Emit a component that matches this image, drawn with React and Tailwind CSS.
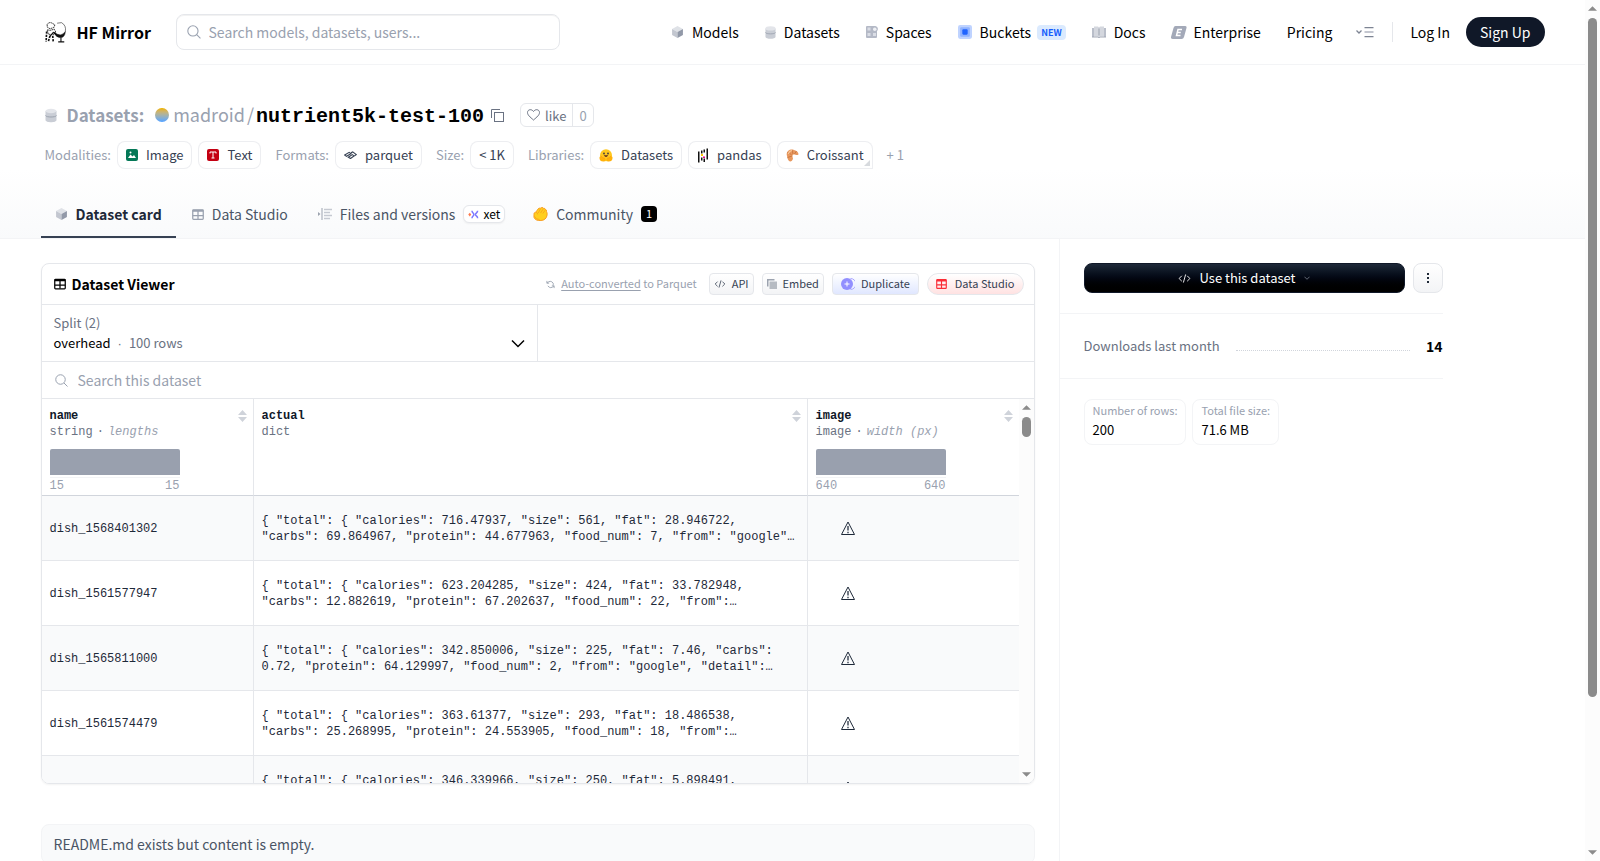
import React from "react";

const CubeIcon = ({ className }) => (
  <svg viewBox="0 0 24 24" className={className}>
    <path d="M12 1 22 6.500 12 12 2 6.500z" fill="#dfe2e7" />
    <path d="M2 6.500 12 12v11L2 17.500z" fill="#c3c7d0" />
    <path d="M22 6.500 12 12v11l10-5.500z" fill="#9299a8" />
  </svg>
);

const DatabaseIcon = ({ className }) => (
  <svg viewBox="0 0 24 28" className={className}>
    <path d="M1 5v18c0 6 22 6 22 0V5z" fill="#c9cdd5" />
    <path d="M1 14c2 4 20 4 22 0" fill="none" stroke="#9ca3af" strokeWidth="2" />
    <ellipse cx="12" cy="5" rx="11" ry="4.500" fill="#e3e5ea" />
  </svg>
);

const SpacesIcon = ({ className }) => (
  <svg viewBox="0 0 24 24" className={className}>
    <path d="M2 0h14a6 6 0 0 1 6 9v13a2 2 0 0 1-2 2H2a2 2 0 0 1-2-2V2a2 2 0 0 1 2-2z" fill="#b4b9c6" />
    <circle cx="18" cy="6" r="5.500" fill="#b4b9c6" />
    <rect x="3" y="3" width="6" height="6" fill="#dadde5" />
    <circle cx="17.500" cy="6.500" r="3.500" fill="#eef0f4" />
    <rect x="3" y="14" width="6" height="6" fill="#dadde5" />
    <rect x="14" y="14" width="6" height="6" fill="#dadde5" />
  </svg>
);

const BucketIcon = ({ className }) => (
  <svg viewBox="0 0 26 26" className={className}>
    <rect width="26" height="26" rx="4" fill="#bfd3ff" />
    <rect x="4" y="4" width="18" height="18" rx="2" fill="#8fb2ff" />
    <rect x="8" y="8" width="10" height="10" rx="2" fill="#1f63ff" />
  </svg>
);

const BookIcon = ({ className }) => (
  <svg viewBox="0 0 28 24" className={className}>
    <path d="M0 22V4h4v18z M24 4h4v18h-4z" fill="#b9bec9" />
    <path d="M4 1h8l2 2 2-2h8v20h-8l-2 2-2-2H4z" fill="#d4d7de" />
    <path d="M14 5v14" stroke="#9ca3af" strokeWidth="2" />
    <path d="M0 22h12l2 1.500 2-1.500h12" stroke="#a3a9b6" strokeWidth="2" fill="none" />
  </svg>
);

const EnterpriseIcon = ({ className }) => (
  <svg viewBox="0 0 32 26" className={className}>
    <path d="M9 0h19q4 0 3 4l-5 18q-1 4-5 4H4q-5 0-4-4L5 4q1-4 4-4z" fill="#a3a9b8" />
    <path d="M22 7h-8l-3 12h8M12.500 13h7" stroke="#fff" strokeWidth="3" fill="none" />
  </svg>
);

const MenuIcon = ({ className }) => (
  <svg viewBox="0 0 36 24" className={className} fill="none" stroke="#7d8493" strokeWidth="2.500">
    <path d="m1 9 5 5 5-5" />
    <path d="M17 3h18M17 21h18" />
    <path d="M17 12h18" stroke="#b0b5c0" strokeWidth="3" />
  </svg>
);

const SearchIcon = ({ className }) => (
  <svg viewBox="0 0 26 26" className={className} fill="none" stroke="currentColor" strokeWidth="2">
    <circle cx="11" cy="11" r="9.500" />
    <path d="m18 18 7 7" />
  </svg>
);

const GridIcon = ({ className }) => (
  <svg viewBox="0 0 24 22" className={className} fill="none" stroke="currentColor" strokeWidth="2.500">
    <rect x="1.500" y="1.500" width="21" height="19" rx="1.500" />
    <path d="M1.500 3.500h21" strokeWidth="4" />
    <path d="M1.500 13h21M12 4v16" />
  </svg>
);

const CodeIcon = ({ className }) => (
  <svg viewBox="0 0 28 20" className={className} fill="none" stroke="currentColor" strokeWidth="2">
    <path d="M8 4 2 10l6 6M20 4l6 6-6 6M16.500 1l-5 18" />
  </svg>
);

const ChevronIcon = ({ className }) => (
  <svg viewBox="0 0 28 18" className={className} fill="none" stroke="currentColor" strokeWidth="3">
    <path d="M2 3l12 12L26 3" />
  </svg>
);

const FilesIcon = ({ className }) => (
  <svg viewBox="0 0 28 24" className={className} fill="none" stroke="#c5c9d1">
    <path d="M0 8v8l5-4z" fill="#9ca3af" stroke="none" />
    <path d="M8 0v24" stroke="#9ca3af" strokeWidth="2" />
    <path d="M12 3h16M12 9h12M12 15h16M12 21h12" strokeWidth="3" />
  </svg>
);

const HandIcon = ({ className }) => (
  <svg viewBox="0 0 32 30" className={className}>
    <path
      d="M2 16q-1-4 4-5l5-7q2-3 4-1l4-2q3 0 3 2 4-1 4 2 4 1 3 5 2 3 1 8-2 10-13 11Q5 30 2 22z"
      fill="#ffcf1f"
      stroke="#f79a1c"
      strokeWidth="2"
    />
    <path d="m11 13 5-9M16 13l6-9M21 14l5-7M6 11q4 1 4 5M3 20q4 7 11 7" stroke="#f79a1c" strokeWidth="1.500" fill="none" />
  </svg>
);

const XetIcon = ({ className }) => (
  <svg viewBox="0 0 28 24" className={className} fill="none" strokeWidth="4">
    <path d="M10 2c0 6 5 6 5 10s-5 4-5 10" stroke="#7c78ff" />
    <path d="M25 2c0 6-6 6-6 10s6 4 6 10" stroke="#7c78ff" />
    <path d="m4 7 4 5-4 5-4-5z" fill="#ff7a4d" />
  </svg>
);

const HugIcon = ({ className }) => (
  <svg viewBox="0 0 28 26" className={className}>
    <circle cx="14" cy="12.500" r="12" fill="#ffc81f" />
    <path d="M1 16q-1 10 10 9 4-4 1-6-5-1-8-5zM27 16q1 10-10 9-4-4-1-6 5-1 8-5z" fill="#ffb10b" />
    <path d="M12 19q-5-1-8-5M16 19q5-1 8-5" stroke="#ff9d0b" strokeWidth="1.500" fill="none" />
    <circle cx="10" cy="9" r="1.800" fill="#3a3b45" />
    <circle cx="18" cy="9" r="1.800" fill="#3a3b45" />
    <path d="M9.500 12.500q4.500 7 9 0z" fill="#5b2a1d" />
  </svg>
);

const PandasIcon = ({ className }) => (
  <svg viewBox="0 0 24 30" className={className}>
    <path d="M2 7h3v22H2zM19 1h3v22h-3zM8 5h3v6H8zM8 19h3v6H8zM13 3h3v6h-3zM13 21h3v7h-3z" fill="#111" />
    <path d="M8 12h4v4H8z" fill="#ffca00" />
    <path d="M12 17h4v3h-4z" fill="#e70488" />
  </svg>
);

const CroissantIcon = ({ className }) => (
  <svg viewBox="0 0 26 26" className={className}>
    <path d="M2 14C-1 5 8-1 16 2c6 1 9 5 9 9-4 3-7-1-10 0-3 1-2 5-1 8-1 5-5 7-8 5-3-3-3-6-4-10z" fill="#e8985e" />
    <path d="m3 7 8 4M12 2l2 8M21 4l-4 6M3 17l9-3" stroke="#c26f3b" strokeWidth="1.500" fill="none" />
    <path d="M12 3q-6 1-7 7" stroke="#f8c79b" strokeWidth="2.500" fill="none" />
  </svg>
);

const WarningIcon = ({ className }) => (
  <svg viewBox="0 0 32 32" className={className} fill="none" stroke="currentColor" strokeWidth="2">
    <path d="M16 4 3 29h26z" />
    <path d="M16 12v9M16 23.500v3" strokeWidth="2.500" />
  </svg>
);

const SortIcon = ({ className }) => (
  <svg viewBox="0 0 9 12" className={className} fill="#cfd3da">
    <path d="M4.500 0 9 5H0zM4.500 12 0 7h9z" />
  </svg>
);

const LogoIcon = ({ className }) => (
  <svg viewBox="0 0 40 40" className={className} fill="none" stroke="#111">
    <path d="M4 6q4-5 9-2l5 3-2 5-7 2-5-3zM4 16l5 1 8-2 3 6-5 4-9-1z" strokeWidth="1.500" strokeDasharray="3 1" />
    <path d="M3 19 2 38M9 27l-3 11M14 27l1 11" strokeWidth="3" strokeDasharray="4 2" />
    <path d="m8 29 7-8 6 4" strokeWidth="2" />
    <path d="M16 20q13 11 21-1-1 12-10 11-7 0-11-10z" fill="#111" />
    <path d="M37 19q2-11-7-16l-8 1" strokeWidth="1" />
    <path d="M29 30v8M24 38h11" strokeWidth="2" />
  </svg>
);

const navLinks = [
  { label: "Models", icon: <CubeIcon className="mr-2 h-[14px] w-[13px]" /> },
  { label: "Datasets", icon: <DatabaseIcon className="mr-2 h-[13px] w-[11px]" /> },
  { label: "Spaces", icon: <SpacesIcon className="mr-2 size-3" /> },
  { label: "Buckets", icon: <BucketIcon className="mr-2 size-[14px]" />, isNew: true },
  { label: "Docs", icon: <BookIcon className="mr-2 h-3 w-[14px]" /> },
  { label: "Enterprise", icon: <EnterpriseIcon className="mr-[6px] h-[13px] w-4" /> },
  { label: "Pricing" },
];

const tagGroups = [
  {
    title: "Modalities:",
    tags: [
      {
        label: "Image",
        icon: (
          <svg viewBox="0 0 24 24" className="size-3">
            <rect width="24" height="24" rx="4" fill="#047857" />
            <path d="m4 18 5-7 4 4 3-3 4 6z" fill="#fff" />
            <circle cx="9" cy="7" r="2" fill="#fff" />
          </svg>
        ),
      },
      {
        label: "Text",
        icon: (
          <svg viewBox="0 0 24 24" className="size-3">
            <rect width="24" height="24" rx="4" fill="#c40012" />
            <path d="M6 9V6h12v3M12 6v12M9 18h6" stroke="#fff" strokeWidth="2" fill="none" />
          </svg>
        ),
      },
    ],
  },
  {
    title: "Formats:",
    tags: [
      {
        label: "parquet",
        icon: (
          <svg viewBox="0 0 28 18" className="h-2 w-[13px] text-gray-700" fill="none" stroke="currentColor" strokeWidth="2.500">
            <path d="m1 9 10-6 4 3-10 6zM9 14l9-6 4 3-8 6zM15 4l4-2 8 6-4 3" />
          </svg>
        ),
      },
    ],
  },
  { title: "Size:", tags: [{ label: "< 1K" }] },
  {
    title: "Libraries:",
    tags: [
      { label: "Datasets", icon: <HugIcon className="h-[13px] w-[14px]" /> },
      { label: "pandas", icon: <PandasIcon className="h-[15px] w-3" /> },
      { label: "Croissant", icon: <CroissantIcon className="size-[13px]" />, corner: true },
    ],
  },
];

const rows = [
  {
    name: "dish_1568401302",
    actual:
      '{ "total": { "calories": 716.47937, "size": 561, "fat": 28.946722, "carbs": 69.864967, "protein": 44.677963, "food_num": 7, "from": "google"…',
  },
  {
    name: "dish_1561577947",
    actual:
      '{ "total": { "calories": 623.204285, "size": 424, "fat": 33.782948, "carbs": 12.882619, "protein": 67.202637, "food_num": 22, "from":…',
  },
  {
    name: "dish_1565811000",
    actual:
      '{ "total": { "calories": 342.850006, "size": 225, "fat": 7.46, "carbs": 0.72, "protein": 64.129997, "food_num": 2, "from": "google", "detail":…',
  },
  {
    name: "dish_1561574479",
    actual:
      '{ "total": { "calories": 363.61377, "size": 293, "fat": 18.486538, "carbs": 25.268995, "protein": 24.553905, "food_num": 18, "from":…',
  },
  {
    name: "dish_1560442303",
    actual:
      '{ "total": { "calories": 346.339966, "size": 250, "fat": 5.898491, "carbs": 40.155243, "protein": 30.461754, "food_num": 12, "from":…',
  },
];

const columns = [
  { name: "name", type: "string", stat: "lengths", min: "15", max: "15", width: "w-[211px]" },
  { name: "actual", type: "dict", width: "border-l border-l-gray-200" },
  { name: "image", type: "image", stat: "width (px)", min: "640", max: "640", width: "w-[212px] border-l border-l-gray-200" },
];

const ScrollTrack = ({ children }) => (
  <div className="flex w-[15px] shrink-0 flex-col items-center bg-[#fcfcfc] py-[6px]">
    <svg viewBox="0 0 10 5" className="h-[5px] w-[9px] shrink-0" fill="#8b8b8b">
      <path d="M5 0l5 5H0z" />
    </svg>
    {children}
    <svg viewBox="0 0 10 5" className="mt-auto h-[5px] w-[9px] shrink-0" fill="#8b8b8b">
      <path d="M5 5l5-5H0z" />
    </svg>
  </div>
);

const Header = () => (
  <header className="border-b border-gray-100">
    <div className="mx-auto flex h-16 max-w-[1536px] items-center px-4">
      <a href="#" className="flex w-[135px] shrink-0 items-center gap-[10px] pl-1">
        <LogoIcon className="size-[22px]" />
        <span className="text-base font-bold">HF Mirror</span>
      </a>
      <label className="flex h-9 w-96 items-center gap-2 rounded-lg border border-gray-200 px-[10px] text-gray-400 inset-shadow-2xs">
        <SearchIcon className="size-[14px] shrink-0" />
        <input
          type="text"
          aria-label="Search models, datasets, users"
          placeholder="Search models, datasets, users..."
          className="w-full outline-none placeholder:text-gray-400"
        />
      </label>
      <nav className="ml-auto flex items-center">
        <div className="mr-6 flex items-center gap-[26px]">
          {navLinks.map((link) => (
            <a key={link.label} href="#" className="flex items-center">
              {link.icon}
              {link.label}
              {link.isNew && (
                <span className="ml-[6px] rounded-sm bg-blue-100 px-1 text-[9px] leading-[15px] font-bold text-blue-600">
                  NEW
                </span>
              )}
            </a>
          ))}
        </div>
        <button aria-label="More" className="mr-[18px]">
          <MenuIcon className="h-3 w-[18px]" />
        </button>
        <span className="mr-[17px] h-5 w-px bg-gray-200" />
        <a href="#" className="mr-4">
          Log In
        </a>
        <a href="#" className="flex h-[30px] items-center rounded-full bg-gray-900 px-[14px] text-white">
          Sign Up
        </a>
      </nav>
    </div>
  </header>
);

const RepoHeader = () => (
  <div className="border-b border-gray-100 bg-linear-to-b from-white from-60% to-gray-50">
    <div className="mx-auto max-w-[1536px] px-4 pt-9">
      <h1 className="ml-1 flex h-7 items-center text-lg text-gray-400">
        <DatabaseIcon className="mr-[10px] h-[15px] w-3" />
        <span className="mr-[11px] text-[17px] font-bold">Datasets:</span>
        <span className="mr-1 size-[14px] rounded-full bg-linear-to-b from-yellow-500 to-blue-400" />
        <span className="flex items-baseline">
          <a href="#">madroid</a>
          <span className="mx-[2px]">/</span>
          <a href="#" className="font-['Liberation_Mono',monospace] text-xl font-bold text-black">
            nutrient5k-test-100
          </a>
        </span>
        <button aria-label="Copy name" className="mr-4 ml-[7px] text-gray-500">
          <svg viewBox="0 0 26 26" className="size-[13px]" fill="none" stroke="currentColor" strokeWidth="2">
            <rect x="7" y="7" width="18" height="18" />
            <path d="M1 18V1h17" />
          </svg>
        </button>
        <span className="flex h-6 items-center rounded-md border border-gray-200 bg-white text-[13px] leading-none">
          <button className="flex h-full items-center gap-[5px] px-[6px] text-gray-500">
            <svg viewBox="0 0 26 24" className="h-3 w-[13px]" fill="none" stroke="currentColor" strokeWidth="2">
              <path d="M13 22C6 16 1 12 1 7c0-6 8-8 12-2 4-6 12-4 12 2 0 5-5 9-12 15z" />
            </svg>
            like
          </button>
          <button className="h-full border-l border-gray-200 px-[6px]">0</button>
        </span>
      </h1>

      <div className="mt-3 ml-1 flex h-7 items-center text-[13px]">
        {tagGroups.map((group) => (
          <div key={group.title} className="mr-2 flex items-center">
            <span className="mr-[6px] text-gray-400">{group.title}</span>
            {group.tags.map((tag) => (
              <a
                key={tag.label}
                href="#"
                className={`relative mr-[6px] flex h-7 items-center gap-2 rounded-lg border border-gray-200/70 bg-white px-2 text-gray-700 ${tag.corner ? "rounded-br-none" : ""}`}
              >
                {tag.icon}
                {tag.label}
                {tag.corner && (
                  <svg viewBox="0 0 6 6" className="absolute right-[2px] bottom-[2px] size-[6px]" fill="#d7dade">
                    <path d="M6 0v6H0z" />
                  </svg>
                )}
              </a>
            ))}
          </div>
        ))}
        <button className="text-gray-400">+ 1</button>
      </div>

      <nav className="mt-[21px] flex h-12 text-gray-600">
        <a
          href="#"
          className="flex items-center gap-2 border-y-2 border-t-transparent border-b-gray-700 px-[14px] font-bold text-gray-800"
        >
          <CubeIcon className="h-[14px] w-[13px]" />
          Dataset card
        </a>
        <a href="#" className="flex items-center gap-2 px-4">
          <GridIcon className="h-[11px] w-3 text-gray-400" />
          Data Studio
        </a>
        <a href="#" className="flex items-center gap-2 px-[14px]">
          <FilesIcon className="h-3 w-[14px]" />
          Files and versions
          <span className="flex h-[18px] items-center gap-1 rounded-md border border-gray-200 bg-white px-1 text-xs text-black shadow-xs">
            <XetIcon className="h-[9px] w-[11px]" />
            xet
          </span>
        </a>
        <a href="#" className="flex items-center gap-2 px-[14px]">
          <HandIcon className="h-[14px] w-[15px]" />
          Community
          <span className="flex size-4 items-center justify-center rounded-sm bg-black text-[11px] text-white">1</span>
        </a>
      </nav>
    </div>
  </div>
);

const Viewer = () => (
  <section className="overflow-hidden rounded-lg border border-gray-200 shadow-xs">
    {/* Toolbar */}
    <div className="flex h-[41px] items-center border-b border-gray-200 pr-[10px] pl-3">
      <GridIcon className="mr-[6px] size-3" />
      <h2 className="font-bold">Dataset Viewer</h2>
      <div className="ml-auto flex items-center text-[11px] text-gray-700">
        <svg viewBox="0 0 20 20" className="mr-[6px] size-[9px] text-gray-400" fill="none" stroke="currentColor" strokeWidth="2">
          <path d="M2 2v5h5M2 7q8-8 14 0v4M18 18v-5h-5M18 13q-8 8-14 0" />
        </svg>
        <span className="mr-3 text-gray-400">
          <a href="#" className="underline underline-offset-2">
            Auto-converted
          </a>{" "}
          to Parquet
        </span>
        <button className="mr-2 flex h-[22px] items-center gap-[6px] rounded-sm border border-gray-200 bg-linear-to-b from-white to-gray-100 px-1">
          <CodeIcon className="h-2 w-3" />
          API
        </button>
        <button className="mr-2 flex h-[22px] items-center gap-[6px] rounded-sm border border-gray-200 bg-linear-to-b from-white to-gray-100 px-1">
          <svg viewBox="0 0 20 20" className="size-[10px]">
            <path d="M0 0h15v3H3v12H0z" fill="#9ca3af" />
            <path d="M5 5h15v15H5z" fill="#b6bbc2" />
          </svg>
          Embed
        </button>
        <button className="mr-2 flex h-[22px] items-center gap-[6px] rounded-sm border border-gray-200 bg-linear-to-b from-white to-indigo-100 px-2">
          <svg viewBox="0 0 28 24" className="h-3 w-[14px]">
            <path d="M19 1a11 11 0 0 1 0 22" fill="none" stroke="#a9a5ff" strokeWidth="2" />
            <circle cx="12" cy="12" r="12" fill="#928fff" />
            <path d="M12 7v10M7 12h10" stroke="#fff" strokeWidth="2" />
          </svg>
          Duplicate
        </button>
        <a href="#" className="flex h-[22px] items-center gap-2 rounded-full border border-gray-200 bg-linear-to-b from-white to-red-100 px-2">
          <GridIcon className="h-[10px] w-[11px] text-red-500" />
          Data Studio
        </a>
      </div>
    </div>

    {/* Split picker */}
    <div className="grid h-[57px] grid-cols-2 border-b border-gray-200 text-[13px]">
      <button className="flex items-end justify-between border-r border-gray-200 px-3 pb-[7px] text-left leading-5">
        <span className="text-gray-500">
          Split (2)
          <br />
          <span className="text-black">overhead</span>
          <span className="mx-[7px] font-['Liberation_Sans',sans-serif]">·</span>
          100 rows
        </span>
        <ChevronIcon className="mb-[6px] h-[9px] w-[14px]" />
      </button>
    </div>

    <label className="flex h-[37px] items-center gap-[10px] border-b border-gray-200 px-[13px] text-gray-400">
      <SearchIcon className="size-[13px] shrink-0" />
      <input
        type="text"
        aria-label="Search this dataset"
        placeholder="Search this dataset"
        className="w-full outline-none placeholder:text-gray-400"
      />
    </label>

    <div className="flex h-[384px]">
      <div className="min-w-0 flex-1 overflow-hidden">
        <table className="w-full table-fixed border-separate border-spacing-0 font-['Liberation_Mono',monospace] text-xs leading-4 text-gray-800">
          <thead>
            <tr className="h-[97px]">
              {columns.map((col) => (
                <th
                  key={col.name}
                  className={`border-b border-b-gray-300 pt-[9px] pr-[6px] pb-px pl-2 text-left align-top font-normal text-gray-500 ${col.width}`}
                >
                  <div className="flex items-center justify-between">
                    <span className="font-bold text-gray-900">{col.name}</span>
                    {/* sort toggle */}
                    <SortIcon className="h-3 w-[9px]" />
                  </div>
                  <div>
                    {col.type}
                    {col.stat && (
                      <>
                        <span className="mx-1">·</span>
                        <span className="text-gray-400 italic">{col.stat}</span>
                      </>
                    )}
                  </div>
                  {col.stat && (
                    <div className="mt-[9px] w-[130px] text-gray-400">
                      <div className="h-[26px] rounded-t-[2px] bg-[#99a0ae]" />
                      <div className="mt-[2px] flex justify-between border-t border-gray-100">
                        <span>{col.min}</span>
                        <span>{col.max}</span>
                      </div>
                    </div>
                  )}
                </th>
              ))}
            </tr>
          </thead>
          <tbody>
            {rows.map((row) => (
              <tr key={row.name} className="h-[65px] odd:bg-gray-50">
                <td className="border-b border-gray-200 px-2 pt-[2px]">{row.name}</td>
                <td className="border-b border-l border-gray-200 px-2 pt-[2px]">{row.actual}</td>
                <td className="border-b border-l border-gray-200 px-2">
                  <div className="flex w-16 justify-center">
                    <WarningIcon className="size-4" />
                  </div>
                </td>
              </tr>
            ))}
          </tbody>
        </table>
      </div>
      <ScrollTrack>
        <div className="mt-[7px] h-5 w-[9px] rounded-full bg-[#8b8b8b]" />
      </ScrollTrack>
    </div>
  </section>
);

const Sidebar = () => (
  <aside className="mr-[102px] w-96 shrink-0 border-l border-gray-100 pt-6">
    <div className="mb-5 flex gap-2 pl-6 text-[13px]">
      <button className="flex h-[30px] flex-1 items-center justify-center gap-2 rounded-lg border border-gray-900 bg-linear-to-b from-gray-800 via-gray-950 to-black text-white">
        <CodeIcon className="h-[9px] w-[13px]" />
        Use this dataset
        <ChevronIcon className="h-1 w-[6px] text-gray-400" />
      </button>
      <button
        aria-label="More options"
        className="flex size-[30px] items-center justify-center rounded-lg border border-gray-200 bg-linear-to-b from-white to-gray-100"
      >
        <svg viewBox="0 0 2 10" className="h-[10px] w-[2px]" fill="#1f2937">
          <path d="M0 0h2v2H0zM0 4h2v2H0zM0 8h2v2H0z" />
        </svg>
      </button>
    </div>
    <div className="flex h-[66px] items-center border-y border-gray-100 pl-6">
      <span className="text-[13px] text-gray-500">Downloads last month</span>
      <span className="mx-4 mt-2 flex-1 border-b border-dotted border-gray-300" />
      <span className="font-bold">14</span>
    </div>
    <div className="mt-5 flex gap-[6px] pl-6">
      <div className="flex h-[46px] flex-col justify-center rounded-lg border border-gray-100 px-2">
        <span className="text-[11px] leading-4 text-gray-400">Number of rows:</span>
        <span className="text-[13px] leading-6">200</span>
      </div>
      <div className="flex h-[46px] flex-col justify-center rounded-lg border border-gray-100 px-2">
        <span className="text-[11px] leading-4 text-gray-400">Total file size:</span>
        <span className="text-[13px] leading-6">71.6 MB</span>
      </div>
    </div>
  </aside>
);

const App = () => {
  return (
    <div className="flex h-screen overflow-hidden bg-white font-['Noto_Sans_CJK_SC',sans-serif] text-sm text-black">
      <div className="flex min-w-0 flex-1 flex-col">
        <Header />
        <RepoHeader />
        <main className="mx-auto flex w-full max-w-[1536px] flex-1 px-4">
          <div className="min-w-0 flex-1 pt-6 pr-6">
            <Viewer />
            <div className="mt-10 rounded-lg border border-gray-100 bg-gray-50 px-3 py-[9px] text-gray-600">
              README.md exists but content is empty.
            </div>
          </div>
          <Sidebar />
        </main>
      </div>
      <ScrollTrack>
        <div className="mt-[7px] h-4/5 w-[9px] rounded-full bg-[#8b8b8b]" />
      </ScrollTrack>
    </div>
  );
};

export default App;
